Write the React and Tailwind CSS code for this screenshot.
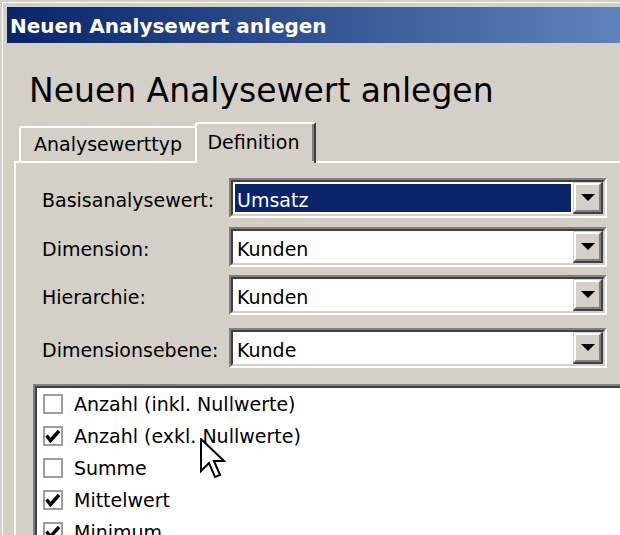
import React from "react";

const fields = [
  { label: "Basisanalysewert:", value: "Umsatz", selected: true, mt: "mt-0" },
  { label: "Dimension:", value: "Kunden", mt: "mt-[9px]" },
  { label: "Hierarchie:", value: "Kunden", mt: "mt-[8px]" },
  { label: "Dimensionsebene:", value: "Kunde", mt: "mt-[13px]" },
];

const options = [
  { text: "Anzahl (inkl. Nullwerte)", checked: false },
  { text: "Anzahl (exkl. Nullwerte)", checked: true },
  { text: "Summe", checked: false },
  { text: "Mittelwert", checked: true },
  { text: "Minimum", checked: true },
];

const DropButton = () => (
  <div className="w-[30px] h-full border-t border-l border-[#d4d0c8] border-b-2 border-r-2 border-b-[#404040] border-r-[#404040]">
    <div className="h-full flex items-center justify-center bg-[#d4d0c8] border-t-2 border-l-2 border-white border-b-2 border-r-2 border-b-[#808080] border-r-[#808080]">
      <svg width="14" height="7" viewBox="0 0 14 7">
        <path d="M0 0H14L7 7Z" fill="#000" />
      </svg>
    </div>
  </div>
);

const Combo = ({ value, selected }) => (
  <div className="w-[378px] h-[40px] border-t-2 border-l-2 border-[#808080] border-b-2 border-r-2 border-b-white border-r-white">
    <div className="h-full flex bg-white border-t-2 border-l-2 border-[#404040] border-b-2 border-r-2 border-b-[#d4d0c8] border-r-[#d4d0c8]">
      <div className="flex-1 p-[2px]">
        <div
          className={
            selected
              ? "h-full flex items-center pl-[2px] pt-[5px] bg-[#0a246a] text-white"
              : "h-full flex items-center pl-[2px] pt-[5px] text-black"
          }
        >
          {value}
        </div>
      </div>
      <DropButton />
    </div>
  </div>
);

const CheckBox = ({ checked }) => (
  <div className="relative w-[20px] h-[20px] shrink-0 border-2 border-[#9c9c9c] bg-white">
    {checked && (
      <svg className="absolute left-0 top-0" width="16" height="16" viewBox="0 0 16 16">
        <path d="M1.5 7.5L5.5 12.5L14 3" stroke="#000" strokeWidth="3.4" fill="none" />
      </svg>
    )}
  </div>
);

const Cursor = () => (
  <svg
    className="absolute left-[200px] top-[438px]"
    width="26"
    height="42"
    viewBox="0 0 13 21"
  >
    <path
      d="M0.5 0.5V16.5L4.5 12.5L7.5 19.5L10 18.5L7 11.5H12Z"
      fill="#fff"
      stroke="#000"
      strokeWidth="1"
      strokeLinejoin="miter"
    />
  </svg>
);

export default function App() {
  return (
    <div className="relative w-[620px] h-[535px] overflow-hidden bg-[#d4d0c8] pt-[2px] pl-[2px] font-['DejaVu_Sans',sans-serif] text-[19px] text-black">
      <div className="h-full border-t border-l border-white pt-[4px] pl-[4px]">
        {/* title bar */}
        <div className="h-[36px] flex items-center pl-[3px] pt-[1px] bg-gradient-to-r from-[#0a246a] to-[#5f83bb] text-white font-bold text-[20px] leading-none">
          Neuen Analysewert anlegen
        </div>

        <div className="mt-[28px] ml-[22px] text-[33px] leading-[40px]">Neuen Analysewert anlegen</div>

        <div className="ml-[7px]">
          {/* tabs */}
          <div className="mt-[11px] flex items-end pl-[5px]">
            <div className="w-[176px] h-[35px] flex items-center justify-center border-t-2 border-l-2 border-white rounded-tl-[3px]">
              Analysewerttyp
            </div>
            <div className="relative z-10 w-[121px] h-[41px] -mb-[2px] pb-[2px] flex items-center justify-center bg-[#d4d0c8] border-t-2 border-l-2 border-white rounded-tl-[3px] border-r-2 border-r-[#404040]">
              <div className="h-full w-full flex items-center justify-center border-r-2 border-[#808080] pr-[2px]">
                Definition
              </div>
            </div>
          </div>

          {/* panel */}
          <div className="border-t-2 border-l-2 border-white pt-[15px] pl-[17px]">
            {fields.map((f) => (
              <div key={f.label} className={"flex items-center pl-[9px] " + f.mt}>
                <div className="w-[187px] pt-[5px]">{f.label}</div>
                <Combo value={f.value} selected={f.selected} />
              </div>
            ))}

            <div className="mt-[16px] border-t-2 border-l-2 border-[#808080]">
              <div className="border-t-2 border-l-2 border-[#404040] bg-white pl-[6px] h-[200px]">
                {options.map((o) => (
                  <div key={o.text} className="h-[32px] flex items-center gap-[11px]">
                    <CheckBox checked={o.checked} />
                    <span>{o.text}</span>
                  </div>
                ))}
              </div>
            </div>
          </div>
        </div>
      </div>
      <Cursor />
    </div>
  );
}
